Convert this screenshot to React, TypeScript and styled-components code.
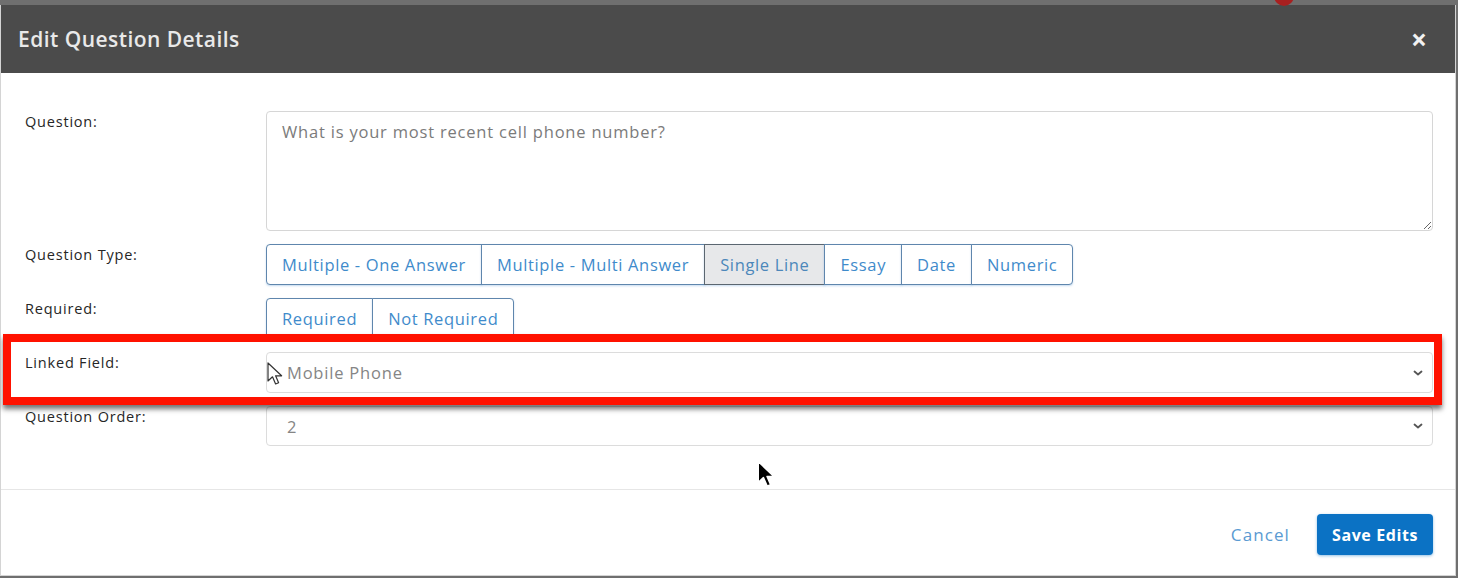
import styled, { createGlobalStyle } from 'styled-components';

const GlobalStyle = createGlobalStyle`
  html, body {
    margin: 0;
    padding: 0;
    background: #6f6f6f;
  }
  * {
    box-sizing: border-box;
  }
`;

const FONT = `'Open Sans', 'Noto Sans', sans-serif`;

const Page = styled.div`
  position: relative;
  width: 1458px;
  height: 578px;
  padding-top: 5px;
  overflow: hidden;
  font-family: ${FONT};
`;

const BackdropDot = styled.div`
  position: absolute;
  top: -14px;
  left: 1274px;
  width: 20px;
  height: 20px;
  border-radius: 50%;
  background: #a82020;
`;

const Modal = styled.div`
  width: 1456px;
  height: 571px;
  background: #fff;
  border: 1px solid #d4d4d4;
  border-top: none;
  display: flex;
  flex-direction: column;
`;

const Header = styled.div`
  height: 68px;
  background: #4b4b4b;
  display: flex;
  align-items: center;
  justify-content: space-between;
  padding: 0 28px 0 17px;
`;

const Title = styled.h4`
  margin: 0;
  font-size: 21px;
  font-weight: 600;
  color: #e9e9e9;
  letter-spacing: 0.45px;
`;

const Close = styled.span`
  font-size: 28px;
  font-weight: 700;
  color: #f2f2f2;
  line-height: 1;
`;

const Body = styled.div`
  display: grid;
  grid-template-columns: 241px 1fr;
  row-gap: 13px;
  padding: 38px 22px 43px 24px;
  border-bottom: 1px solid #e6e6e6;
`;

const Label = styled.label`
  font-size: 14.5px;
  line-height: 22px;
  font-weight: 500;
  letter-spacing: 0.8px;
  color: #262626;
`;

const TextArea = styled.textarea`
  height: 120px;
  width: 100%;
  resize: vertical;
  border: 1px solid #d6d6d6;
  border-radius: 4px;
  padding: 8px 15px;
  font-family: ${FONT};
  font-size: 16.5px;
  letter-spacing: 0.8px;
  color: #333;
  &::placeholder {
    color: #7b7b7b;
  }
`;

const Group = styled.div`
  display: flex;
  align-items: flex-start;
`;

const GroupButton = styled.button<{ $active?: boolean; $first?: boolean; $last?: boolean }>`
  height: 41px;
  padding: 0 15px;
  margin-left: ${(p) => (p.$first ? '0' : '-1px')};
  border: 1px solid ${(p) => (p.$active ? '#5b6670' : '#5f86ad')};
  border-radius: ${(p) => (p.$first ? '4px 0 0 4px' : p.$last ? '0 4px 4px 0' : '0')};
  background: ${(p) => (p.$active ? '#e7e8ea' : '#fff')};
  box-shadow: 0 1px 2px rgba(90, 150, 210, 0.35);
  font-family: ${FONT};
  font-size: 16.5px;
  letter-spacing: 0.65px;
  color: ${(p) => (p.$active ? '#4c87ba' : '#3f8bcb')};
  cursor: pointer;
`;

const SelectBox = styled.div<{ $height: number }>`
  height: ${(p) => p.$height}px;
  border: 1px solid #dcdcdc;
  border-radius: 4px;
  display: flex;
  align-items: center;
  justify-content: space-between;
  padding: 0 8px 0 20px;
  font-size: 16.5px;
  letter-spacing: 0.8px;
  color: #858585;
`;

const Footer = styled.div`
  flex: 1;
  display: flex;
  justify-content: flex-end;
  align-items: flex-start;
  gap: 27px;
  padding: 24px 22px 0 0;
`;

const CancelLink = styled.button`
  height: 41px;
  border: none;
  background: none;
  padding: 0;
  font-family: ${FONT};
  font-size: 17px;
  letter-spacing: 1.1px;
  color: #5a9ad2;
  cursor: pointer;
`;

const SaveButton = styled.button`
  height: 41px;
  width: 116px;
  border: none;
  border-radius: 4px;
  background: #0b72c4;
  box-shadow: 0 1px 3px rgba(11, 114, 196, 0.45);
  font-family: ${FONT};
  font-size: 16px;
  font-weight: 700;
  letter-spacing: 0.6px;
  color: #fff;
  cursor: pointer;
`;

const Highlight = styled.div`
  position: absolute;
  left: 3px;
  top: 334px;
  width: 1439px;
  height: 71px;
  border: 8px solid #ff1200;
  box-shadow: 0 4px 5px rgba(0, 0, 0, 0.55);
  pointer-events: none;
`;

const Pointer = styled.svg<{ $x: number; $y: number }>`
  position: absolute;
  left: ${(p) => p.$x}px;
  top: ${(p) => p.$y}px;
  pointer-events: none;
`;

const Chevron = () => (
  <svg width="12" height="8" viewBox="0 0 12 8">
    <path d="M2.5 2.5 L6 5.5 L9.5 2.5" fill="none" stroke="#555" strokeWidth="1.8" strokeLinecap="round" strokeLinejoin="round" />
  </svg>
);

const questionTypes = [
  'Multiple - One Answer',
  'Multiple - Multi Answer',
  'Single Line',
  'Essay',
  'Date',
  'Numeric',
];

const requiredOptions = ['Required', 'Not Required'];

const arrow = 'M1 1 L1 19 L5.5 14.8 L8.6 22 L11.6 20.7 L8.6 13.8 L14.6 13.8 Z';

export default function App() {
  return (
    <>
      <GlobalStyle />
      <Page>
        <BackdropDot />
        <Modal>
          <Header>
            <Title>Edit Question Details</Title>
            <Close>×</Close>
          </Header>
          <Body>
            <Label>Question:</Label>
            <TextArea placeholder="What is your most recent cell phone number?" />

            <Label>Question Type:</Label>
            <Group>
              {questionTypes.map((t, i) => (
                <GroupButton
                  key={t}
                  $first={i === 0}
                  $last={i === questionTypes.length - 1}
                  $active={t === 'Single Line'}
                >
                  {t}
                </GroupButton>
              ))}
            </Group>

            <Label>Required:</Label>
            <Group>
              {requiredOptions.map((t, i) => (
                <GroupButton key={t} $first={i === 0} $last={i === requiredOptions.length - 1}>
                  {t}
                </GroupButton>
              ))}
            </Group>

            <Label>Linked Field:</Label>
            <SelectBox $height={41}>
              <span>Mobile Phone</span>
              <Chevron />
            </SelectBox>

            <Label>Question Order:</Label>
            <SelectBox $height={40}>
              <span>2</span>
              <Chevron />
            </SelectBox>
          </Body>
          <Footer>
            <CancelLink>Cancel</CancelLink>
            <SaveButton>Save Edits</SaveButton>
          </Footer>
        </Modal>

        <Highlight />

        <Pointer $x={267} $y={362} width="18" height="26" viewBox="0 0 18 26">
          <path d={arrow} fill="#fff" stroke="#333" strokeWidth="1.2" strokeLinejoin="round" />
        </Pointer>
        <Pointer $x={757} $y={460} width="20" height="30" viewBox="0 0 17 25">
          <path d={arrow} fill="#000" stroke="#fff" strokeWidth="1.4" strokeLinejoin="round" />
        </Pointer>
      </Page>
    </>
  );
}
